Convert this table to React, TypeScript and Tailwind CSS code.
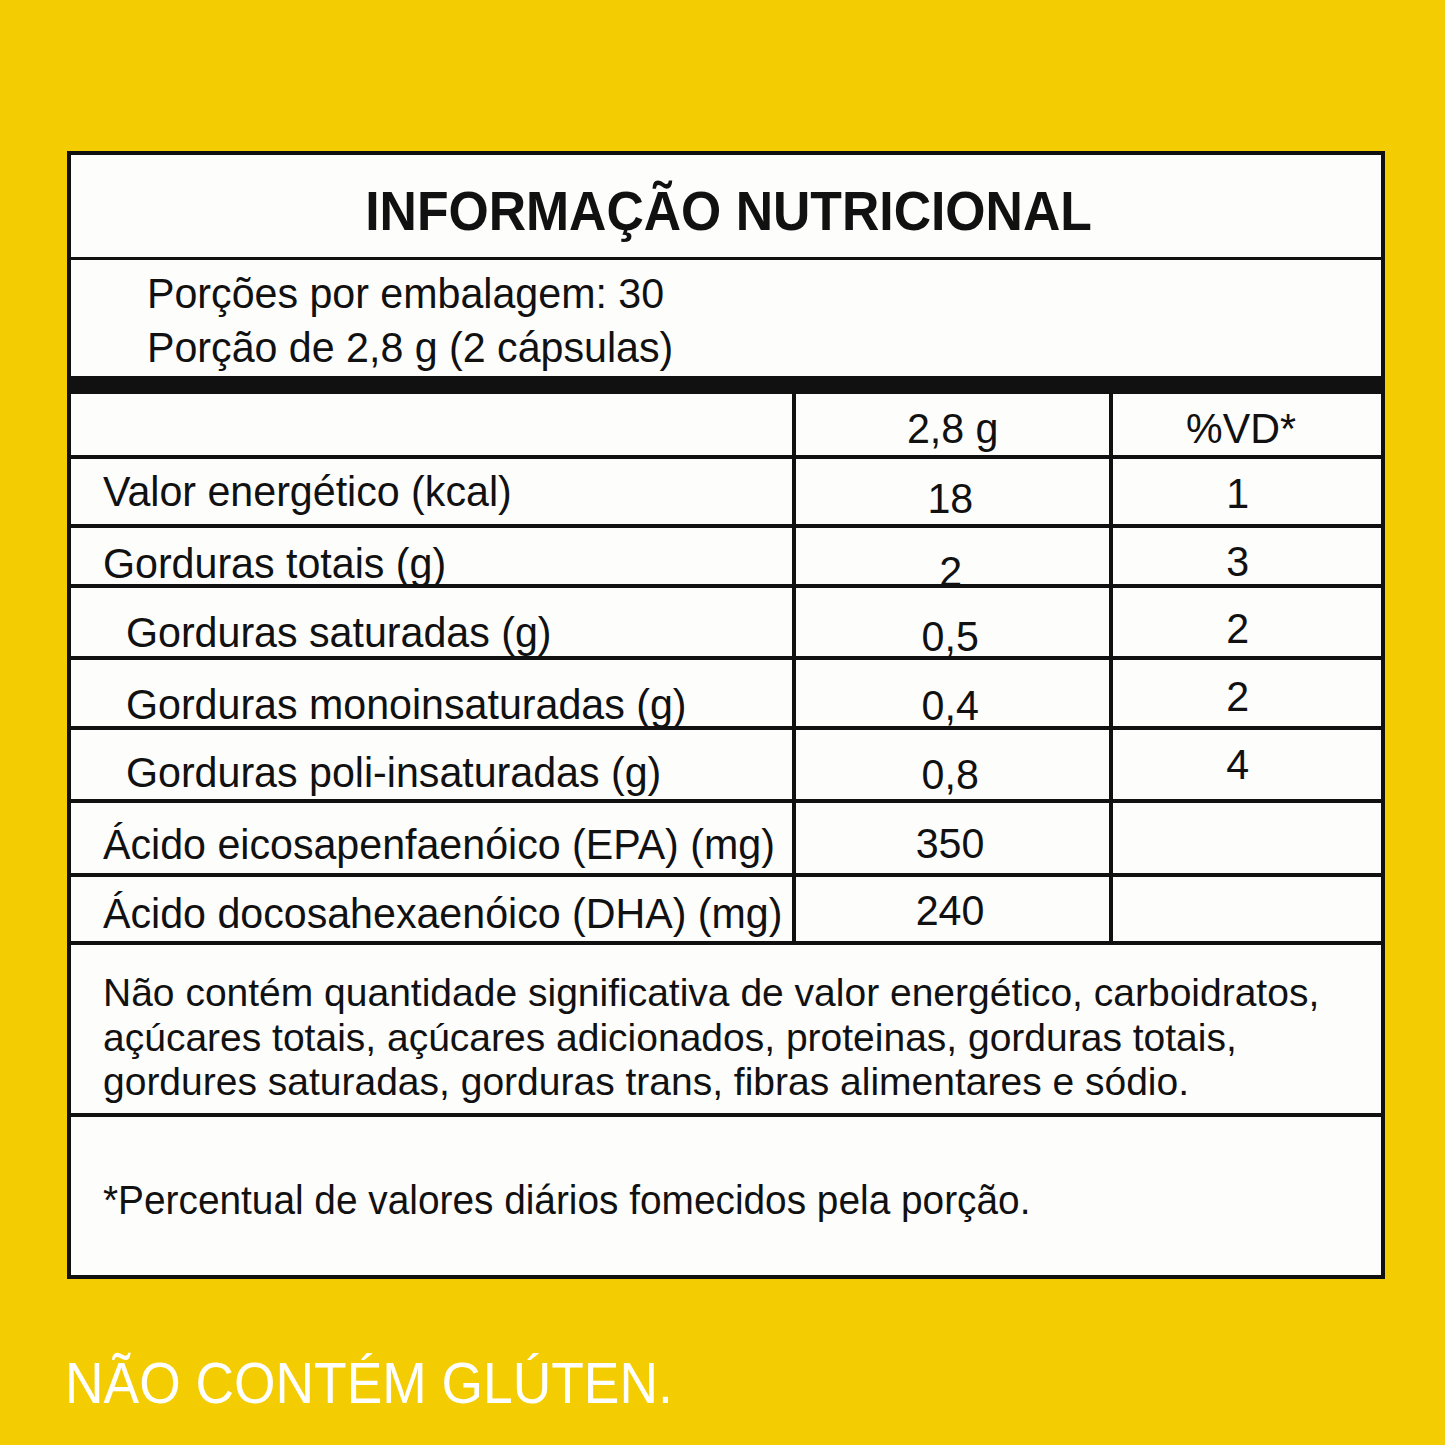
import React from "react";

type Row = {
  label: string;
  v: string;
  d: string;
  h: string;
  ind: boolean;
  lp: string;
  vp: string;
  dp: string;
};

const rows: Row[] = [
  { label: "Valor energético (kcal)", v: "18", d: "1", h: "h-[69px]", ind: false, lp: "pt-[12px]", vp: "pt-[19px]", dp: "pt-[14px]" },
  { label: "Gorduras totais (g)", v: "2", d: "3", h: "h-[60px]", ind: false, lp: "pt-[15px]", vp: "pt-[23px]", dp: "pt-[13px]" },
  { label: "Gorduras saturadas (g)", v: "0,5", d: "2", h: "h-[72px]", ind: true, lp: "pt-[24px]", vp: "pt-[28px]", dp: "pt-[20px]" },
  { label: "Gorduras monoinsaturadas (g)", v: "0,4", d: "2", h: "h-[70px]", ind: true, lp: "pt-[24px]", vp: "pt-[25px]", dp: "pt-[16px]" },
  { label: "Gorduras poli-insaturadas (g)", v: "0,8", d: "4", h: "h-[73px]", ind: true, lp: "pt-[22px]", vp: "pt-[24px]", dp: "pt-[14px]" },
  { label: "Ácido eicosapenfaenóico (EPA) (mg)", v: "350", d: "", h: "h-[74px]", ind: false, lp: "pt-[21px]", vp: "pt-[20px]", dp: "pt-[14px]" },
  { label: "Ácido docosahexaenóico (DHA) (mg)", v: "240", d: "", h: "h-[68px]", ind: false, lp: "pt-[16px]", vp: "pt-[13px]", dp: "pt-[14px]" },
];

export default function App() {
  return (
    <div className="w-[1445px] h-[1445px] bg-[#f4cc02] pt-[151px] pl-[67px] overflow-hidden font-['Liberation_Sans',Arial,sans-serif] text-[#111]">
      <div className="w-[1318px] border-4 border-[#111] bg-[#fdfdfc]">
        {/* Title */}
        <div className="h-[105px] border-b-[3px] border-[#111] pt-[29px] text-center pl-[4px]">
          <span className="inline-block origin-center scale-x-[0.94] text-[55px] leading-none font-bold">
            INFORMAÇÃO NUTRICIONAL
          </span>
        </div>
        {/* Servings */}
        <div className="h-[134px] border-b-[18px] border-[#111] pt-[7px] pl-[76px] text-[42px] leading-[54px]">
          <div className="origin-left scale-x-[0.98] whitespace-nowrap">Porções por embalagem: 30</div>
          <div className="origin-left scale-x-[0.98] whitespace-nowrap">Porção de 2,8 g (2 cápsulas)</div>
        </div>
        {/* Header */}
        <div className="grid grid-cols-[721px_317px_272px] h-[65px] border-b-4 border-[#111] text-[42px] leading-none">
          <div />
          <div className="border-l-4 border-[#111] pt-[14px] text-center">
            <span className="inline-block scale-x-[0.98]">2,8 g</span>
          </div>
          <div className="border-l-4 border-[#111] pt-[14px] text-center pr-[12px]">
            <span className="inline-block scale-x-[0.98]">%VD*</span>
          </div>
        </div>
        {rows.map((r) => (
          <div
            key={r.label}
            className={`grid grid-cols-[721px_317px_272px] ${r.h} border-b-4 border-[#111] text-[42px] leading-none`}
          >
            <div className={`overflow-hidden whitespace-nowrap ${r.ind ? "pl-[55px]" : "pl-[32px]"} ${r.lp}`}>
              <span className="inline-block origin-left scale-x-[0.98]">{r.label}</span>
            </div>
            <div className={`border-l-4 border-[#111] overflow-hidden text-center pr-[4px] ${r.vp}`}>
              <span className="inline-block scale-x-[0.98]">{r.v}</span>
            </div>
            <div className={`border-l-4 border-[#111] overflow-hidden text-center pr-[18px] ${r.dp}`}>
              <span className="inline-block scale-x-[0.98]">{r.d}</span>
            </div>
          </div>
        ))}
        {/* Note */}
        <div className="h-[172px] border-b-4 border-[#111] pt-[26px] pl-[32px] text-[39px] leading-[44.5px]">
          <div className="whitespace-nowrap">Não contém quantidade significativa de valor energético, carboidratos,</div>
          <div className="whitespace-nowrap">açúcares totais, açúcares adicionados, proteinas, gorduras totais,</div>
          <div className="whitespace-nowrap">gordures saturadas, gorduras trans, fibras alimentares e sódio.</div>
        </div>
        {/* Footnote */}
        <div className="h-[158px] pt-[63px] pl-[32px] text-[40px] leading-none">
          <span className="inline-block origin-left scale-x-[0.97] whitespace-nowrap">
            *Percentual de valores diários fomecidos pela porção.
          </span>
        </div>
      </div>
      <div className="mt-[75px] -ml-[2px]">
        <span className="inline-block origin-left scale-x-[0.92] text-[58px] leading-none text-white whitespace-nowrap">
          NÃO CONTÉM GLÚTEN.
        </span>
      </div>
    </div>
  );
}
